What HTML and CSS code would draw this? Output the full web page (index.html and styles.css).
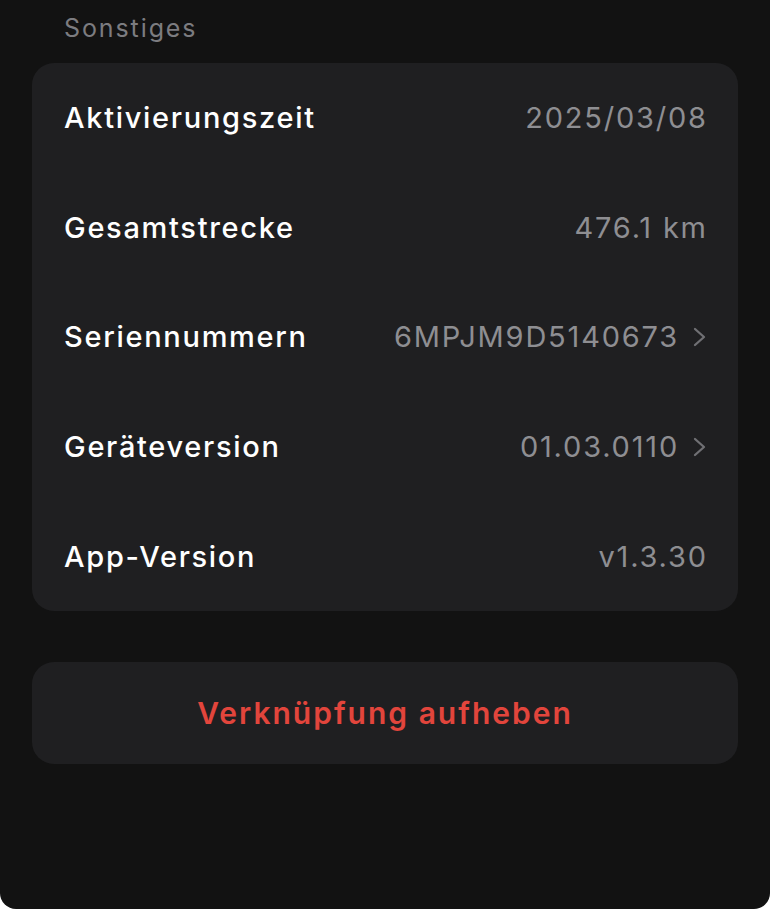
FILE: index.html
```html
<!DOCTYPE html>
<html lang="de">
<head>
    <meta charset="UTF-8">
    <title>Sonstiges</title>
    <link rel="stylesheet" href="styles.css">
</head>
<body>
<div class="screen">
    <div class="section-title">Sonstiges</div>
    <div class="card">
        <div class="row">
            <span class="label">Aktivierungszeit</span>
            <span class="value">2025/03/08</span>
        </div>
        <div class="row">
            <span class="label">Gesamtstrecke</span>
            <span class="value">476.1 km</span>
        </div>
        <div class="row">
            <span class="label">Seriennummern</span>
            <span class="value">6MPJM9D5140673
                <svg class="chevron" viewBox="0 0 13 20"><path d="M2 2 L11 10 L2 18"/></svg>
            </span>
        </div>
        <div class="row">
            <span class="label">Geräteversion</span>
            <span class="value">01.03.0110
                <svg class="chevron" viewBox="0 0 13 20"><path d="M2 2 L11 10 L2 18"/></svg>
            </span>
        </div>
        <div class="row">
            <span class="label">App-Version</span>
            <span class="value">v1.3.30</span>
        </div>
    </div>
    <button class="unlink">Verknüpfung aufheben</button>
</div>
</body>
</html>
```

FILE: styles.css
```css
html {
    background-color: #ffffff;
}

body {
    margin: 0;
    font-family: Inter, "Noto Sans", sans-serif;
}

.screen {
    height: 909px;
    box-sizing: border-box;
    background-color: #121212;
    border-radius: 0 0 16px 16px;
    padding: 10px 32px 0;
}

.section-title {
    color: #7c7c80;
    font-size: 25px;
    line-height: 36px;
    letter-spacing: 1.9px;
    padding-left: 32px;
    margin-bottom: 17px;
}

.card {
    background-color: #1f1f21;
    border-radius: 22px;
}

.row {
    height: 109.6px;
    padding: 0 32px;
    display: flex;
    align-items: center;
    justify-content: space-between;
}

.label {
    color: #ffffff;
    font-size: 29px;
    font-weight: 500;
    letter-spacing: 1.7px;
}

.value {
    color: #8e8e92;
    font-size: 29px;
    display: flex;
    align-items: center;
    gap: 14px;
    letter-spacing: 1.8px;
    margin-right: -1.8px;
}

.chevron {
    width: 13px;
    height: 20px;
    margin-right: 1.8px;
    fill: none;
    stroke: #707074;
    stroke-width: 2.3;
    stroke-linecap: round;
    stroke-linejoin: round;
}

.unlink {
    display: block;
    width: 100%;
    height: 102px;
    margin-top: 51px;
    border: none;
    border-radius: 22px;
    background-color: #1f1f21;
    color: #e2453c;
    font-family: Inter, "Noto Sans", sans-serif;
    font-size: 30px;
    font-weight: 600;
    letter-spacing: 2px;
    cursor: pointer;
}
```
